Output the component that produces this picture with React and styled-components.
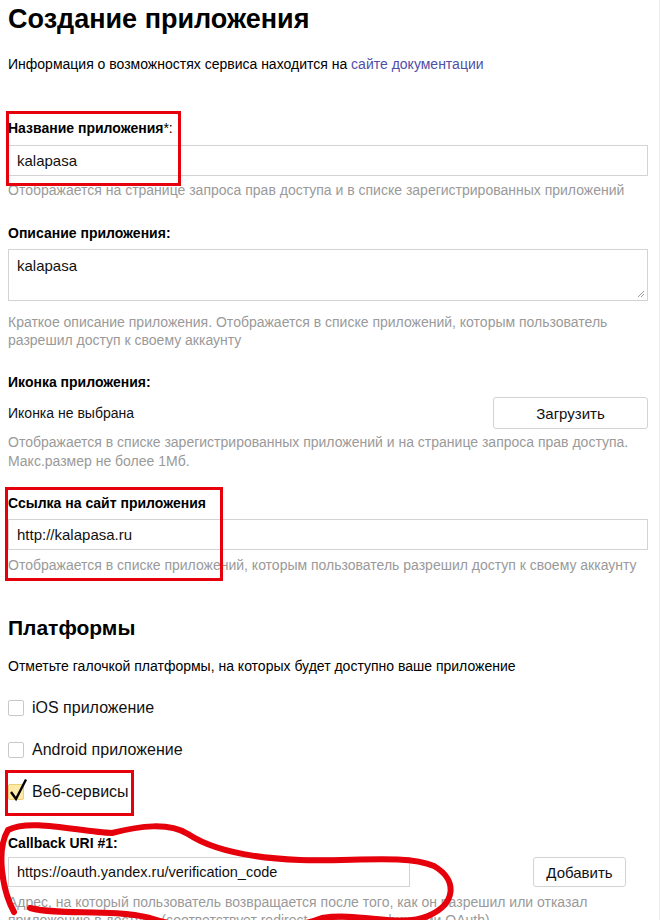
import React from 'react';
import styled, { createGlobalStyle } from 'styled-components';

const GlobalStyle = createGlobalStyle`
  html, body {
    margin: 0;
    padding: 0;
    background: #fff;
  }
  body {
    font-family: Arial, "Liberation Sans", sans-serif;
    color: #000;
  }
`;

// Page wrapper with the light divider on the right
const Page = styled.div`
  position: relative;
  width: 651px;
  height: 920px;
  overflow: hidden;
  padding: 0 0 0 8px;
  border-right: 1px solid #ececec;
`;

const Content = styled.div`
  width: 640px;
`;

const Title = styled.h1`
  margin: 0;
  padding-top: 4px;
  font-size: 27px;
  line-height: 30px;
  font-weight: 700;
`;

const Lead = styled.p`
  margin: ${p => p.$top || 21}px 0 0;
  font-size: 14px;
  line-height: 18px;
`;

const Link = styled.a`
  color: #4f4fa8;
  text-decoration: none;
`;

const Field = styled.div`
  margin-top: ${p => p.$top || 26}px;
`;

const Label = styled.div`
  font-size: 14px;
  line-height: 16px;
  font-weight: 700;
  margin-bottom: ${p => p.$gap || 8}px;

  span {
    font-weight: 400;
  }
`;

const TextInput = styled.div`
  box-sizing: border-box;
  width: ${p => p.$width || '640px'};
  height: ${p => p.$height || 31}px;
  border: 1px solid #d3d3d3;
  padding: 0 8px;
  display: flex;
  align-items: center;
  font-size: ${p => p.$size || 15}px;
  color: #111;
`;

const TextArea = styled.div`
  position: relative;
  box-sizing: border-box;
  width: 640px;
  height: 52px;
  border: 1px solid #d3d3d3;
  padding: 6px 8px;
  font-size: 15px;
  line-height: 20px;
  color: #111;
`;

const Grip = styled.svg`
  position: absolute;
  right: 2px;
  bottom: 2px;
`;

const Hint = styled.div`
  margin-top: ${p => p.$top || 5}px;
  font-size: 14px;
  line-height: ${p => p.$lh || 18}px;
  color: #9a9a9a;
`;

const Row = styled.div`
  display: flex;
  align-items: center;
  justify-content: ${p => p.$spread ? 'space-between' : 'flex-start'};
  gap: ${p => p.$gap || 0}px;
`;

const Plain = styled.span`
  font-size: 14px;
  color: #111;
`;

const Button = styled.button`
  box-sizing: border-box;
  width: ${p => p.$width}px;
  height: ${p => p.$height || 32}px;
  border: 1px solid #d3d3d3;
  border-radius: 3px;
  background: #fff;
  font-family: inherit;
  font-size: 15px;
  color: #111;
  padding: 0;
`;

const SubTitle = styled.h2`
  margin: 41px 0 0;
  font-size: 21px;
  line-height: 26px;
  font-weight: 700;
`;

const Checks = styled.div`
  margin-top: 23px;
  display: flex;
  flex-direction: column;
  gap: 22px;
`;

const CheckRow = styled.label`
  display: flex;
  align-items: center;
  gap: 8px;
  height: 20px;
  font-size: 16px;
  color: #111;
`;

const Box = styled.span`
  position: relative;
  box-sizing: border-box;
  width: 16px;
  height: 16px;
  border: 1px solid #c9c9c9;
  border-radius: 2px;
  background: ${p => p.$checked ? '#ffe9a6' : '#fff'};
  border-color: ${p => p.$checked ? '#e8cf7a' : '#c9c9c9'};

  svg {
    position: absolute;
    left: 0;
    top: -7px;
  }
`;

// Red marker annotations drawn over the screenshot
const Frame = styled.div`
  position: absolute;
  box-sizing: border-box;
  border: 3px solid #e5000b;
  pointer-events: none;
`;

const Scribble = styled.svg`
  position: absolute;
  left: 0;
  top: 0;
  pointer-events: none;
`;

function Check({ checked, children }) {
  return (
    <CheckRow>
      <Box $checked={checked}>
        {checked && (
          <svg width="22" height="24" viewBox="0 0 22 24">
            <path d="M2 14 L7 21 L17 1.5" fill="none" stroke="#000" strokeWidth="2.4" strokeLinejoin="miter" />
          </svg>
        )}
      </Box>
      {children}
    </CheckRow>
  );
}

export default function App() {
  return (
    <>
      <GlobalStyle />
      <Page>
        <Content>
          <Title>Создание приложения</Title>
          <Lead>
            Информация о возможностях сервиса находится на <Link href="#">сайте документации</Link>
          </Lead>

          <Field $top={47}>
            <Label $gap={9}>Название приложения<span>*:</span></Label>
            <TextInput>kalapasa</TextInput>
            <Hint>Отображается на странице запроса прав доступа и в списке зарегистрированных приложений</Hint>
          </Field>

          <Field>
            <Label>Описание приложения:</Label>
            <TextArea>
              kalapasa
              <Grip width="9" height="9" viewBox="0 0 9 9">
                <path d="M8 2 L2 8 M8 5 L5 8" stroke="#999" strokeWidth="1" />
              </Grip>
            </TextArea>
            <Hint $top={12}>
              Краткое описание приложения. Отображается в списке приложений, которым пользователь разрешил доступ к своему аккаунту
            </Hint>
          </Field>

          <Field $top={25}>
            <Label $gap={7}>Иконка приложения:</Label>
            <Row $spread>
              <Plain>Иконка не выбрана</Plain>
              <Button $width={155}>Загрузить</Button>
            </Row>
            <Hint $top={4} $lh={19}>
              Отображается в списке зарегистрированных приложений и на странице запроса прав доступа.
              <br />
              Макс.размер не более 1Мб.
            </Hint>
          </Field>

          <Field $top={24}>
            <Label>Ссылка на сайт приложения</Label>
            <TextInput>http://kalapasa.ru</TextInput>
            <Hint $top={6}>Отображается в списке приложений, которым пользователь разрешил доступ к своему аккаунту</Hint>
          </Field>

          <SubTitle>Платформы</SubTitle>
          <Lead $top={16}>Отметьте галочкой платформы, на которых будет доступно ваше приложение</Lead>

          <Checks>
            <Check>iOS приложение</Check>
            <Check>Android приложение</Check>
            <Check checked>Веб-сервисы</Check>
          </Checks>

          <Field $top={33}>
            <Label $gap={6}>Callback URI #1:</Label>
            <Row $gap={123}>
              <TextInput $width="402px" $height={30} $size={14.5}>https://oauth.yandex.ru/verification_code</TextInput>
              <Button $width={93} $height={30}>Добавить</Button>
            </Row>
            <Hint $top={6}>
              Адрес, на который пользователь возвращается после того, как он разрешил или отказал
              <br />
              приложению в доступе (соответствует redirect_uri в спецификации OAuth)
            </Hint>
          </Field>
        </Content>

        <Frame style={{ left: 6, top: 111, width: 175, height: 75 }} />
        <Frame style={{ left: 5, top: 487, width: 218, height: 94 }} />
        <Frame style={{ left: 5, top: 770, width: 129, height: 46 }} />
        <Scribble width="662" height="920" viewBox="0 0 662 920">
          <path
            d="M14 912 C 2 890, -4 850, 8 830 C 30 818, 80 832, 112 833 C 140 826, 168 822, 188 834
               C 212 850, 250 858, 300 860 C 350 862, 405 854, 434 866 C 458 880, 456 904, 428 916
               C 400 928, 360 912, 322 918 C 280 934, 200 934, 150 918 C 110 908, 60 916, 30 908"
            fill="none"
            stroke="#e5000b"
            strokeWidth="6"
            strokeLinecap="round"
          />
        </Scribble>
      </Page>
    </>
  );
}
